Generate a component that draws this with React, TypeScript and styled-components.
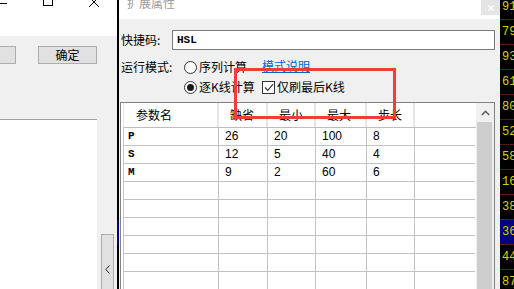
import React from "react";
import styled, { createGlobalStyle } from "styled-components";

const Global = createGlobalStyle`
  html, body { margin: 0; padding: 0; background: #f0f0f0; overflow: hidden; }
  body {
    font-family: "Noto Sans CJK SC", "Liberation Sans", sans-serif;
    font-size: 12px;
    color: #000;
  }
`;

const Screen = styled.div`
  position: relative;
  width: 514px;
  height: 289px;
  display: flex;
  overflow: hidden;
`;

/* ---------- back window (left) ---------- */
const BackWindow = styled.div`
  width: 117px;
  flex: none;
  display: flex;
  flex-direction: column;
  background: #f0f0f0;
  overflow: hidden;
`;
const BackTitle = styled.div`
  height: 36px;
  flex: none;
  margin-left: -21px;
  background: #fff;
  display: flex;
`;
const CtrlSlot = styled.div<{ $lift: number }>`
  width: 46px;
  display: flex;
  justify-content: center;
  align-items: flex-start;
  svg { margin-top: ${(p) => -p.$lift}px; }
`;
const BackButtons = styled.div`
  display: flex;
  gap: 22px;
  margin: 10px 0 0 -43px;
  flex: none;
`;
const WinButton = styled.div`
  width: 59px;
  height: 18px;
  box-sizing: border-box;
  flex: none;
  border: 1px solid #adadad;
  background: #e1e1e1;
  display: flex;
  align-items: center;
  justify-content: center;
  line-height: 12px;
`;
const BackLower = styled.div`
  margin-top: 55px;
  flex: 1;
  display: flex;
`;
const WhitePanel = styled.div`
  width: 97px;
  flex: none;
  background: #fff;
  border-top: 1px solid #a0a0a0;
`;
const SideStrip = styled.div`
  flex: 1;
  padding: 115px 0 0 4px;
`;
const CollapseButton = styled.div`
  width: 13px;
  height: 70px;
  box-sizing: border-box;
  border: 1px solid #adadad;
  background: #e1e1e1;
  display: flex;
  align-items: center;
  justify-content: center;
`;

/* ---------- stock list slivers ---------- */
const Sliver = styled.div`
  width: 2px;
  flex: none;
  background: #000;
`;
const SliverSelected = styled.div`
  margin-top: 220px;
  height: 25px;
  background: #000080;
`;
const StockColumn = styled.div`
  width: 14px;
  flex: none;
  background: #000;
  display: flex;
  flex-direction: column;
  overflow: hidden;
`;
const StockRow = styled.div<{ $sel?: boolean }>`
  flex: none;
  height: 24px;
  border-bottom: 1px solid #4f1c1c;
  background: ${(p) => (p.$sel ? "#000080" : "#000")};
  color: #d4d400;
  font-family: "Liberation Mono", monospace;
  font-size: 12px;
  line-height: 25px;
  padding-left: 2px;
  white-space: nowrap;
  &:first-child { margin-top: -5px; }
`;

/* ---------- dialog ---------- */
const Dialog = styled.div`
  width: 381px;
  flex: none;
  display: flex;
  flex-direction: column;
  background: #f0f0f0;
`;
const DialogTitle = styled.div`
  height: 19px;
  flex: none;
  background: #fff;
  display: flex;
  align-items: flex-start;
`;
const TitleText = styled.div`
  margin: -3px 0 0 8px;
  line-height: 12px;
  color: #9c9c9c;
`;
const TitleClose = styled.div`
  margin-left: auto;
  width: 19px;
  height: 15px;
  background: #e5e5e5;
  display: flex;
  align-items: center;
  justify-content: center;
`;
const DialogBody = styled.div`
  flex: 1;
  display: flex;
  flex-direction: column;
  padding: 0 5px 0 1px;
  min-height: 0;
`;
const FieldRow = styled.div`
  margin-top: 11px;
  height: 20px;
  display: flex;
  align-items: center;
  flex: none;
`;
const FieldLabel = styled.div<{ $w: number }>`
  width: ${(p) => p.$w}px;
  flex: none;
  padding-left: 1px;
  box-sizing: border-box;
  line-height: 14px;
  white-space: nowrap;
`;
const TextInput = styled.div`
  flex: 1;
  height: 20px;
  box-sizing: border-box;
  border: 1px solid #7a7a7a;
  background: #fff;
  padding-left: 4px;
  font-family: "Liberation Mono", monospace;
  font-size: 11px;
  font-weight: bold;
  line-height: 18px;
`;
const ModeRow = styled.div<{ $first?: boolean; $indent?: number }>`
  margin-top: ${(p) => (p.$first ? 7 : 0)}px;
  padding-left: ${(p) => p.$indent ?? 0}px;
  height: 20px;
  display: flex;
  align-items: center;
  flex: none;
`;
const Option = styled.div<{ $w?: number }>`
  ${(p) => (p.$w ? `width: ${p.$w}px;` : "")}
  flex: none;
  display: flex;
  align-items: center;
  gap: 2px;
  line-height: 14px;
  white-space: nowrap;
`;
const RadioCircle = styled.div<{ $on?: boolean }>`
  width: 13px;
  height: 13px;
  box-sizing: border-box;
  border-radius: 50%;
  border: 1px solid #333;
  background: #fff;
  display: flex;
  align-items: center;
  justify-content: center;
  &::after {
    content: "";
    display: ${(p) => (p.$on ? "block" : "none")};
    width: 7px;
    height: 7px;
    border-radius: 50%;
    background: #1a1a1a;
  }
`;
const CheckBox = styled.div`
  width: 13px;
  height: 13px;
  box-sizing: border-box;
  border: 1px solid #333;
  background: #fff;
  display: flex;
  align-items: center;
  justify-content: center;
`;
const HelpLink = styled.span`
  color: #0066cc;
  text-decoration: underline;
  line-height: 14px;
  margin-top: -2px;
`;

/* ---------- list ---------- */
const ListBox = styled.div`
  margin-top: 5px;
  flex: 1;
  min-height: 0;
  box-sizing: border-box;
  border: 1px solid #828282;
  border-bottom: none;
  background: #fff;
  display: flex;
  padding-left: 2px;
  overflow: hidden;
`;
const Grid = styled.div`
  flex: 1;
  display: flex;
  flex-direction: column;
  overflow: hidden;
`;
const cols = "95px 49px 48px 51px 48px 1fr";
const HeaderRow = styled.div`
  display: grid;
  grid-template-columns: ${cols};
  height: 25px;
  flex: none;
  box-sizing: border-box;
  border-bottom: 1px solid #bdbdbd;
  border-left: 1px solid #e3e3e3;
`;
const HeaderCell = styled.div<{ $pad: number }>`
  border-right: 2px solid #e5e5e5;
  padding-left: ${(p) => p.$pad}px;
  line-height: 24px;
  white-space: nowrap;
  &:last-child { border-right: none; }
`;
const BodyRow = styled.div`
  display: grid;
  grid-template-columns: ${cols};
  height: 18px;
  flex: none;
  box-sizing: border-box;
  border-bottom: 1px solid #c2c2c2;
  border-left: 1px solid #c2c2c2;
  margin-right: 1px;
`;
const BodyCell = styled.div<{ $mono?: boolean }>`
  border-right: 1px solid #c2c2c2;
  padding-left: ${(p) => (p.$mono ? 4 : 6)}px;
  font-family: ${(p) =>
    p.$mono ? `"Liberation Mono", monospace` : `"Liberation Sans", sans-serif`};
  font-size: ${(p) => (p.$mono ? 11 : 12)}px;
  font-weight: ${(p) => (p.$mono ? "bold" : "normal")};
  line-height: 17px;
  white-space: nowrap;
  &:last-child { border-right: none; }
`;
const ScrollBar = styled.div`
  width: 18px;
  flex: none;
  background: #f0f0f0;
  display: flex;
  flex-direction: column;
`;
const ScrollUp = styled.div`
  height: 19px;
  flex: none;
  display: flex;
  align-items: center;
  justify-content: center;
`;
const ScrollThumb = styled.div`
  flex: 1;
  margin: 0 2px 0 1px;
  background: #cdcdcd;
`;

const Highlight = styled.div`
  position: absolute;
  left: 234px;
  top: 68px;
  width: 162px;
  height: 51px;
  box-sizing: border-box;
  border: 3px solid #f23b3b;
  pointer-events: none;
`;

const params = [
  ["P", "26", "20", "100", "8"],
  ["S", "12", "5", "40", "4"],
  ["M", "9", "2", "60", "6"],
];
const stock = ["91", "79", "93", "61", "80", "52", "58", "16", "38", "36", "44", "87"];
const headers: [string, number][] = [
  ["参数名", 12],
  ["缺省", 11],
  ["最小", 11],
  ["最大", 11],
  ["步长", 11],
  ["", 0],
];

export default function App() {
  const rows = [...params, ...Array.from({ length: 7 }, () => ["", "", "", "", ""])];
  return (
    <Screen>
      <Global />
      <BackWindow>
        <BackTitle>
          <CtrlSlot $lift={2}>
            <svg width="10" height="10" viewBox="0 0 10 10">
              <line x1="0" y1="5.5" x2="10" y2="5.5" stroke="#000" strokeWidth="1" />
            </svg>
          </CtrlSlot>
          <CtrlSlot $lift={4}>
            <svg width="10" height="10" viewBox="0 0 10 10">
              <rect x="0.5" y="0.5" width="9" height="9" fill="none" stroke="#000" strokeWidth="1" />
            </svg>
          </CtrlSlot>
          <CtrlSlot $lift={3}>
            <svg width="10" height="10" viewBox="0 0 10 10">
              <path d="M0 0L10 10M10 0L0 10" stroke="#000" strokeWidth="1" />
            </svg>
          </CtrlSlot>
        </BackTitle>
        <BackButtons>
          <WinButton>取消</WinButton>
          <WinButton>确定</WinButton>
        </BackButtons>
        <BackLower>
          <WhitePanel />
          <SideStrip>
            <CollapseButton>
              <svg width="5" height="9" viewBox="0 0 5 9">
                <path d="M4.5 0.5L0.8 4.5L4.5 8.5" fill="none" stroke="#222" strokeWidth="1" />
              </svg>
            </CollapseButton>
          </SideStrip>
        </BackLower>
      </BackWindow>

      <Sliver>
        <SliverSelected />
      </Sliver>

      <Dialog>
        <DialogTitle>
          <TitleText>扩展属性</TitleText>
          <TitleClose>
            <svg width="6" height="6" viewBox="0 0 6 6">
              <path d="M0.5 0.5L5.5 5.5M5.5 0.5L0.5 5.5" stroke="#fff" strokeWidth="1.4" />
            </svg>
          </TitleClose>
        </DialogTitle>
        <DialogBody>
          <FieldRow>
            <FieldLabel $w={52}>快捷码:</FieldLabel>
            <TextInput>HSL</TextInput>
          </FieldRow>
          <ModeRow $first>
            <FieldLabel $w={64}>运行模式:</FieldLabel>
            <Option $w={78}>
              <RadioCircle />
              <span>序列计算</span>
            </Option>
            <HelpLink>模式说明</HelpLink>
          </ModeRow>
          <ModeRow $indent={64}>
            <Option $w={78}>
              <RadioCircle $on />
              <span>逐K线计算</span>
            </Option>
            <Option>
              <CheckBox>
                <svg width="10" height="9" viewBox="0 0 10 9">
                  <path d="M1 4.5L3.8 7.3L9 1.2" fill="none" stroke="#333" strokeWidth="1.2" />
                </svg>
              </CheckBox>
              <span>仅刷最后K线</span>
            </Option>
          </ModeRow>
          <ListBox>
            <Grid>
              <HeaderRow>
                {headers.map(([h, pad], i) => (
                  <HeaderCell key={i} $pad={pad}>
                    {h}
                  </HeaderCell>
                ))}
              </HeaderRow>
              {rows.map((r, i) => (
                <BodyRow key={i}>
                  {r.map((c, j) => (
                    <BodyCell key={j} $mono={j === 0}>
                      {c}
                    </BodyCell>
                  ))}
                  <BodyCell />
                </BodyRow>
              ))}
            </Grid>
            <ScrollBar>
              <ScrollUp>
                <svg width="9" height="6" viewBox="0 0 9 6">
                  <path d="M0.8 5L4.5 1.3L8.2 5" fill="none" stroke="#606060" strokeWidth="1.6" />
                </svg>
              </ScrollUp>
              <ScrollThumb />
            </ScrollBar>
          </ListBox>
        </DialogBody>
      </Dialog>

      <StockColumn>
        {stock.map((s, i) => (
          <StockRow key={i} $sel={i === 9}>
            {s}
          </StockRow>
        ))}
      </StockColumn>

      <Highlight />
    </Screen>
  );
}
